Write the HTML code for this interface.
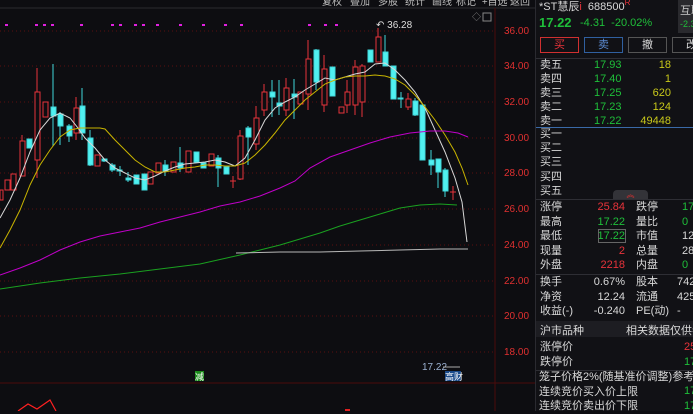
<!DOCTYPE html>
<html><head><meta charset="utf-8"><style>
*{margin:0;padding:0;box-sizing:border-box}
body{width:693px;height:411px;background:#0d0d11;overflow:hidden;position:relative;font-family:"Liberation Sans","Noto Sans CJK SC",sans-serif;font-size:11px;color:#d0d0d0}
.a{position:absolute;white-space:nowrap}
.r{color:#e8333a}.g{color:#1fbf3a}.y{color:#c8c81a}.w{color:#d8d8d8}
#rp{position:absolute;left:535px;top:0;width:158px;height:411px;background:#111115;border-left:1px solid #2a2a30}
.hl{position:absolute;left:0;width:158px;height:1px;background:#2e2e34}
.btn{position:absolute;top:37px;width:39px;height:16px;border:1px solid #555;text-align:center;line-height:14px;font-size:11px}
</style></head><body>
<svg class="a" style="left:0;top:0" width="535" height="411">
<g stroke="#5a1010" stroke-dasharray="1,3">
<line x1="0" y1="31" x2="495" y2="31"/><line x1="0" y1="66" x2="495" y2="66"/><line x1="0" y1="102" x2="495" y2="102"/><line x1="0" y1="138" x2="495" y2="138"/><line x1="0" y1="173" x2="495" y2="173"/><line x1="0" y1="209" x2="495" y2="209"/><line x1="0" y1="245" x2="495" y2="245"/><line x1="0" y1="281" x2="495" y2="281"/><line x1="0" y1="316" x2="495" y2="316"/><line x1="0" y1="352" x2="495" y2="352"/>
</g>
<line x1="0" y1="8" x2="535" y2="8" stroke="#2a2a30"/>
<line x1="495" y1="8" x2="495" y2="411" stroke="#4a0c0c"/>
<line x1="0" y1="383" x2="535" y2="383" stroke="#4a0c0c"/>
<g fill="#e020e0"><rect x="5" y="24" width="3" height="2"/><rect x="35" y="24" width="3" height="2"/><rect x="43" y="24" width="3" height="2"/><rect x="51" y="24" width="3" height="2"/><rect x="80" y="24" width="3" height="2"/><rect x="111" y="24" width="3" height="2"/><rect x="119" y="24" width="3" height="2"/><rect x="134" y="24" width="3" height="2"/><rect x="142" y="24" width="3" height="2"/><rect x="156" y="24" width="3" height="2"/><rect x="179" y="24" width="3" height="2"/><rect x="202" y="24" width="3" height="2"/><rect x="224" y="24" width="3" height="2"/><rect x="240" y="24" width="3" height="2"/><rect x="308" y="24" width="3" height="2"/><rect x="324" y="24" width="3" height="2"/><rect x="335" y="24" width="3" height="2"/></g>
<g stroke-width="1">
<!-- red candles -->
<g stroke="#e8333a" fill="#0d0d11">
<rect x="0" y="190" width="3" height="10"/><rect x="5" y="180" width="5" height="10"/><rect x="11" y="174" width="5" height="16"/>
<line x1="22" y1="135" x2="22" y2="141"/><rect x="20" y="141" width="5" height="35"/>
<line x1="37" y1="68" x2="37" y2="178"/><rect x="35" y="92" width="5" height="68"/>
<rect x="43" y="102" width="5" height="15"/>
<line x1="76" y1="97" x2="76" y2="140"/><rect x="74" y="108" width="5" height="25"/>
<rect x="95" y="155" width="5" height="11"/>
<rect x="148" y="172" width="5" height="12"/><rect x="156" y="163" width="5" height="10"/><rect x="171" y="162" width="5" height="10"/>
<rect x="186" y="151" width="5" height="21"/><rect x="209" y="154" width="5" height="12"/>
<line x1="233" y1="176" x2="233" y2="188"/><line x1="230" y1="181" x2="236" y2="181"/>
<line x1="240" y1="130" x2="240" y2="180"/><rect x="238" y="136" width="5" height="43"/>
<line x1="256" y1="106" x2="256" y2="150"/><rect x="254" y="118" width="5" height="26"/>
<line x1="264" y1="84" x2="264" y2="116"/><rect x="262" y="92" width="5" height="18"/>
<line x1="286" y1="78" x2="286" y2="116"/><rect x="284" y="88" width="5" height="22"/>
<rect x="298" y="92" width="5" height="12"/>
<line x1="308" y1="40" x2="308" y2="110"/><rect x="306" y="59" width="5" height="35"/>
<line x1="324" y1="55" x2="324" y2="112"/><rect x="322" y="69" width="5" height="36"/>
<rect x="339" y="107" width="5" height="6"/>
<line x1="347" y1="80" x2="347" y2="113"/><rect x="345" y="92" width="5" height="13"/>
<line x1="355" y1="60" x2="355" y2="115"/><rect x="353" y="67" width="5" height="38"/>
<line x1="362" y1="64" x2="362" y2="117"/><rect x="360" y="66" width="5" height="36"/>
<line x1="378" y1="28" x2="378" y2="62"/><rect x="376" y="37" width="5" height="25"/>
<line x1="408" y1="93" x2="408" y2="110"/><rect x="406" y="99" width="5" height="8"/>
<line x1="453" y1="186" x2="453" y2="200"/><line x1="450" y1="192" x2="456" y2="192"/>
</g>
<!-- cyan candles -->
<g stroke="#3fd8dc" fill="#50f0f0">
<rect x="27" y="139" width="5" height="9"/>
<line x1="53" y1="64" x2="53" y2="146"/><rect x="51" y="107" width="5" height="9"/>
<line x1="60" y1="112" x2="60" y2="145"/><rect x="58" y="114" width="5" height="12"/>
<line x1="69" y1="124" x2="69" y2="142"/><rect x="67" y="126" width="5" height="10"/>
<line x1="82" y1="88" x2="82" y2="140"/><rect x="80" y="106" width="5" height="27"/>
<line x1="90" y1="130" x2="90" y2="166"/><rect x="88" y="138" width="5" height="27"/>
<line x1="104" y1="159" x2="104" y2="162"/><rect x="102" y="159" width="5" height="2"/>
<line x1="112" y1="163" x2="112" y2="172"/><rect x="110" y="165" width="5" height="5"/>
<line x1="120" y1="166" x2="120" y2="176"/><rect x="117" y="170" width="5" height="1"/>
<line x1="128" y1="172" x2="128" y2="182"/><rect x="126" y="178" width="5" height="2"/>
<rect x="134" y="175" width="5" height="9"/><rect x="142" y="174" width="5" height="16"/>
<line x1="165" y1="160" x2="165" y2="176"/><rect x="163" y="165" width="5" height="6"/>
<line x1="180" y1="147" x2="180" y2="172"/><rect x="178" y="163" width="5" height="5"/>
<rect x="194" y="152" width="5" height="10"/><rect x="201" y="163" width="5" height="5"/>
<line x1="218" y1="155" x2="218" y2="187"/><rect x="216" y="158" width="5" height="10"/>
<rect x="224" y="167" width="5" height="7"/>
<line x1="248" y1="126" x2="248" y2="165"/><rect x="246" y="128" width="5" height="9"/>
<line x1="272" y1="80" x2="272" y2="117"/><rect x="270" y="92" width="5" height="5"/>
<line x1="279" y1="80" x2="279" y2="115"/><rect x="277" y="103" width="5" height="3"/>
<line x1="294" y1="79" x2="294" y2="119"/><rect x="292" y="94" width="5" height="3"/>
<line x1="316" y1="49" x2="316" y2="90"/><rect x="314" y="50" width="5" height="32"/>
<rect x="330" y="67" width="5" height="29"/>
<rect x="368" y="50" width="5" height="12"/>
<line x1="385" y1="35" x2="385" y2="66"/><rect x="383" y="52" width="5" height="14"/>
<rect x="391" y="66" width="5" height="33"/>
<line x1="401" y1="92" x2="401" y2="108"/><rect x="398" y="98" width="5" height="1"/>
<line x1="415" y1="98" x2="415" y2="116"/><rect x="413" y="101" width="5" height="14"/>
<rect x="420" y="105" width="5" height="55"/>
<line x1="431" y1="150" x2="431" y2="175"/><rect x="429" y="160" width="5" height="5"/>
<line x1="438" y1="159" x2="438" y2="188"/><rect x="436" y="159" width="5" height="13"/>
<line x1="445" y1="168" x2="445" y2="197"/><rect x="443" y="170" width="5" height="21"/>
</g>
</g>
<text x="376" y="28" fill="#ddd" font-size="10" font-family="Liberation Sans">↶ 36.28</text>
<!-- MAs -->
<polyline fill="none" stroke="#d8d8d8" points="0,218 10,200 20,178 30,152 40,130 50,118 60,113 70,118 78,128 85,138 95,148 105,160 115,168 125,173 135,178 145,180 155,176 165,171 175,167 185,164 195,163 205,162 215,160 225,162 235,166 245,158 255,140 265,120 275,108 285,102 295,97 305,90 315,84 325,78 335,80 345,77 355,74 365,72 375,64 385,63 395,70 405,80 415,92 425,108 435,130 445,152 455,178 462,202 467,242"/>
<polyline fill="none" stroke="#c8b400" points="0,248 10,230 20,210 30,185 40,165 50,150 60,137 70,130 80,128 90,128 100,128 105,129 115,140 125,150 135,160 145,167 155,172 165,172 175,170 185,168 195,167 205,165 215,165 225,166 235,166 245,163 255,155 265,145 275,133 285,120 295,110 305,100 315,92 325,84 335,80 345,77 355,76 365,76 375,75 385,76 395,79 405,85 415,95 425,107 435,120 445,135 455,152 462,168 468,185"/>
<polyline fill="none" stroke="#c000c8" points="0,275 20,268 40,260 60,250 80,242 100,236 120,232 140,228 160,222 180,217 200,212 220,206 240,202 260,196 280,188 295,181 310,168 330,157 350,150 370,143 390,137 410,133 430,131 445,131 458,133 468,137"/>
<polyline fill="none" stroke="#1aa020" points="0,289 40,283 80,278 120,274 160,269 200,264 240,255 260,250 280,245 300,239 320,233 340,226 360,220 380,214 400,208 420,205 440,204 457,205"/>
<polyline fill="none" stroke="#b8b8b8" points="236,253 280,252 320,252 360,251 400,250 440,249 468,249"/>
<g font-size="10" fill="#e03030" font-family="Liberation Sans">
<text x="504" y="34">36.00</text><text x="504" y="69">34.00</text><text x="504" y="105">32.00</text><text x="504" y="141">30.00</text><text x="504" y="176">28.00</text><text x="504" y="212">26.00</text><text x="504" y="248">24.00</text><text x="504" y="284">22.00</text><text x="504" y="319">20.00</text><text x="504" y="355">18.00</text>
</g>
<text x="422" y="370" fill="#9ab0d0" font-size="10" font-family="Liberation Sans">17.22</text>
<line x1="443" y1="367" x2="460" y2="367" stroke="#aaa"/>
<rect x="195" y="371" width="9" height="10" fill="#1a8a1a"/><text x="195" y="380" fill="#fff" font-size="9" font-family="Noto Sans CJK SC">减</text>
<rect x="445" y="371" width="16" height="10" fill="#1a4a8a"/><text x="445" y="380" fill="#fff" font-size="9" font-family="Noto Sans CJK SC">高财</text>
<polyline fill="none" stroke="#ff2020" stroke-width="1.2" points="18,411 28,404 37,409 50,400 56,411"/>
<rect x="345" y="409" width="5" height="2" fill="#e02020"/>
<g font-size="10" fill="#bbb" font-family="Noto Sans CJK SC"><text x="322" y="5">复权</text><text x="350" y="5">叠加</text><text x="378" y="5">多股</text><text x="405" y="5">统计</text><text x="432" y="5">画线</text><text x="456" y="5">标记</text><text x="482" y="5">+自选</text><text x="510" y="5">返回</text></g>
<text x="472" y="20" fill="#888" font-size="9">◇</text><rect x="483" y="13" width="8" height="8" fill="none" stroke="#888"/>
</svg>

<div id="rp">
<div class="a w" style="left:3px;top:-2px;font-size:11px">*ST慧辰<span class="r">i</span> &nbsp;688500<span class="r" style="font-size:8px;vertical-align:top">R</span></div>
<div class="a" style="left:142px;top:0;width:20px;height:33px;background:#2a2a2e;color:#ccc;padding:2px">互联<br><span class="g" style="font-size:9px">-2.3</span></div>
<div class="a g" style="left:3px;top:15px;font-size:13px;font-weight:bold">17.22</div>
<div class="a g" style="left:44px;top:17px">-4.31 &nbsp;-20.02%</div>
<div class="btn r" style="left:4px;border-color:#d03030">买</div>
<div class="btn" style="left:48px;border-color:#3060a0;color:#5b8ad0">卖</div>
<div class="btn w" style="left:92px">撤</div>
<div class="btn w" style="left:136px">改</div>
<div class="hl" style="top:58px"></div>
<div class="a w" style="left:4px;top:58px;line-height:14px">卖五<br>卖四<br>卖三<br>卖二<br>卖一</div>
<div class="a g" style="left:58px;top:58px;line-height:14px">17.93<br>17.40<br>17.25<br>17.23<br>17.22</div>
<div class="a y" style="left:95px;width:40px;text-align:right;top:58px;line-height:14px">18<br>1<br>620<br>124<br>49448</div>
<div class="a" style="left:0;top:127px;width:158px;height:1px;background:#3a6aa8"></div>
<div class="a w" style="left:4px;top:127px;line-height:14.2px">买一<br>买二<br>买三<br>买四<br>买五</div>
<div class="a" style="left:77px;top:190px;width:35px;height:9px;background:#333338;border-radius:4px 4px 0 0;color:#e03030;font-size:8px;text-align:center;line-height:9px">︽</div>
<div class="hl" style="top:199px"></div>
<div class="a w" style="left:4px;top:200px;line-height:14.5px">涨停<br>最高<br>最低<br>现量<br>外盘</div>
<div class="a" style="left:45px;top:200px;width:44px;text-align:right;line-height:14.5px"><span class="r">25.84</span><br><span class="g">17.22</span><br><span class="g">17.22</span><br><span class="r">2</span><br><span class="r">2218</span></div>
<div class="a" style="left:62px;top:229px;width:28px;height:14px;border:1px solid #666"></div>
<div class="a w" style="left:100px;top:200px;line-height:14.5px">跌停<br>量比<br>市值<br>总量<br>内盘</div>
<div class="a w" style="left:146px;top:200px;line-height:14.5px"><span class="g">17</span><br><span class="g">0</span><br>12.<br>28<br><span class="g">0</span></div>
<div class="hl" style="top:274px"></div>
<div class="a w" style="left:4px;top:275px;line-height:14.5px">换手<br>净资<br>收益(-)</div>
<div class="a w" style="left:40px;top:275px;width:49px;text-align:right;line-height:14.5px">0.67%<br>12.24<br>-0.240</div>
<div class="a w" style="left:100px;top:275px;line-height:14.5px">股本<br>流通<br>PE(动)</div>
<div class="a w" style="left:141px;top:275px;line-height:14.5px">742<br>425<br>-</div>
<div class="a" style="left:0;top:321px;width:158px;height:16px;background:#1d1d22"></div>
<div class="a w" style="left:4px;top:322px">沪市品种</div>
<div class="a w" style="left:90px;top:322px">相关数据仅供参</div>
<div class="a w" style="left:4px;top:340px;line-height:14.5px">涨停价<br>跌停价</div>
<div class="a" style="left:148px;top:340px;line-height:14.5px"><span class="r">25</span><br><span class="g">17</span></div>
<div class="hl" style="top:370px"></div>
<div class="a w" style="left:3px;top:370px;line-height:14.5px">笼子价格2%(随基准价调整)参考<br>连续竞价买入价上限<br>连续竞价卖出价下限</div>
<div class="a g" style="left:148px;top:384px;line-height:14.5px">17<br>17</div>
</div>
</body></html>
